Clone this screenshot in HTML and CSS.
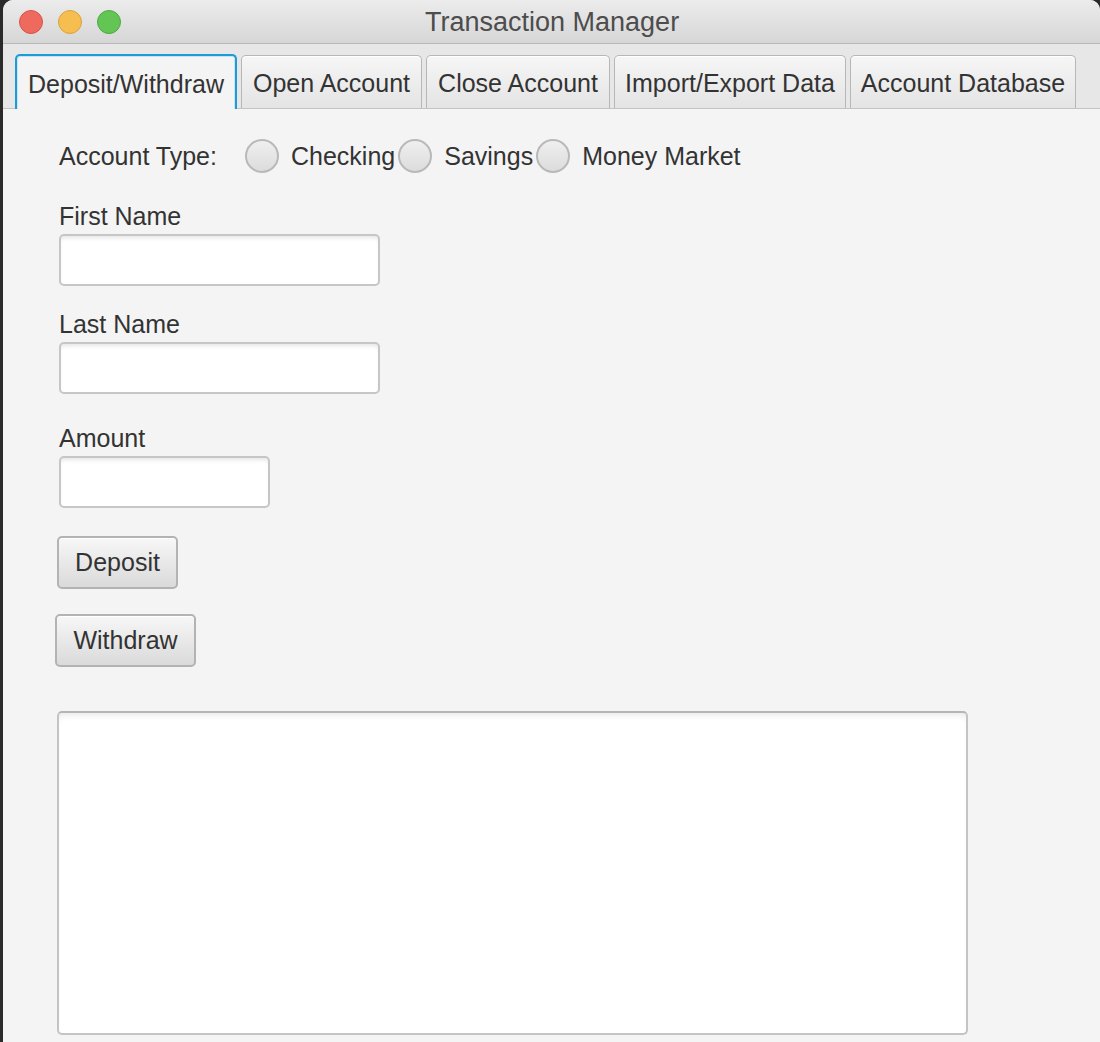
FILE: index.html
```html
<!DOCTYPE html>
<html>
<head>
<meta charset="utf-8">
<title>Transaction Manager</title>
<link rel="stylesheet" href="styles.css">
</head>
<body>
<div class="window">
  <div class="titlebar">
    <div class="lights">
      <span class="light red"></span>
      <span class="light yellow"></span>
      <span class="light green"></span>
    </div>
    <div class="title">Transaction Manager</div>
  </div>
  <div class="tabbar">
    <div class="tab tab-1 selected">Deposit/Withdraw</div>
    <div class="tab tab-2">Open Account</div>
    <div class="tab tab-3">Close Account</div>
    <div class="tab tab-4">Import/Export Data</div>
    <div class="tab tab-5">Account Database</div>
  </div>
  <div class="content">
    <div class="type-row">
      <span class="type-label">Account Type:</span>
      <label class="radio"><span class="dot"></span><span class="radio-text">Checking</span></label>
      <label class="radio"><span class="dot"></span><span class="radio-text">Savings</span></label>
      <label class="radio"><span class="dot"></span><span class="radio-text">Money Market</span></label>
    </div>
    <div class="field first">
      <div class="label">First Name</div>
      <div class="input wide"></div>
    </div>
    <div class="field last">
      <div class="label">Last Name</div>
      <div class="input wide"></div>
    </div>
    <div class="field amount">
      <div class="label">Amount</div>
      <div class="input narrow"></div>
    </div>
    <div class="btn deposit">Deposit</div>
    <div class="btn withdraw">Withdraw</div>
    <div class="textarea"></div>
  </div>
</div>
</body>
</html>
```

FILE: styles.css
```css
html, body {
  margin: 0;
  padding: 0;
  width: 1100px;
  height: 1042px;
  overflow: hidden;
  background: #2a2a2a;
  font-family: "Liberation Sans", Arial, sans-serif;
  color: #333333;
}

.window {
  margin-left: 3px;
  width: 1097px;
  height: 1042px;
  background: #f4f4f4;
  border-top-left-radius: 10px;
  border-top-right-radius: 10px;
  overflow: hidden;
  display: flex;
  flex-direction: column;
}

.titlebar {
  height: 43px;
  flex: none;
  background: linear-gradient(#ececec, #d6d6d6);
  border-bottom: 1px solid #b8b8b8;
  display: flex;
  align-items: center;
  position: relative;
}

.lights {
  display: flex;
  gap: 15px;
  padding-left: 16px;
}

.light {
  width: 24px;
  height: 24px;
  border-radius: 50%;
  box-sizing: border-box;
}
.red { background: #ee6a5f; border: 1px solid #d5544a; }
.yellow { background: #f6be4f; border: 1px solid #d9a23c; }
.green { background: #62c554; border: 1px solid #4fa941; }

.title {
  position: absolute;
  left: 422px;
  top: 0;
  height: 43px;
  line-height: 45px;
  font-size: 27px;
  color: #4d4d4d;
}

.tabbar {
  height: 65px;
  flex: none;
  background: #e7e7e7;
  border-bottom: 1px solid #c4c4c4;
  display: flex;
  align-items: flex-end;
  padding-left: 12px;
  gap: 4px;
  box-sizing: border-box;
}

.tab {
  height: 53px;
  box-sizing: border-box;
  padding-top: 3px;
  border: 1px solid #b7b7b7;
  border-bottom: none;
  border-radius: 5px 5px 0 0;
  background: linear-gradient(#f6f6f6, #e4e4e4);
  box-shadow: inset 0 1px 0 #ffffff;
  display: flex;
  align-items: center;
  justify-content: center;
  font-size: 25px;
  color: #333333;
  white-space: nowrap;
}

.tab-1 { width: 222px; }
.tab-2 { width: 181px; }
.tab-3 { width: 184px; }
.tab-4 { width: 232px; }
.tab-5 { width: 226px; }

.tab.selected {
  height: 55px;
  margin-bottom: -1px;
  border: 2px solid #1c9bd6;
  border-bottom: none;
  background: #f4f4f4;
  box-shadow: inset 1px 1px 0 #c6e4f2, inset -1px 0 0 #c6e4f2;
  position: relative;
}

.content {
  flex: 1;
  padding: 30px 0 0 56px;
  display: flex;
  flex-direction: column;
  align-items: flex-start;
  font-size: 25px;
}

.type-row {
  display: flex;
  align-items: center;
  height: 34px;
}

.type-label {
  margin-right: 28px;
}

.radio {
  display: flex;
  align-items: center;
}

.dot {
  width: 34px;
  height: 34px;
  box-sizing: border-box;
  border-radius: 50%;
  border: 2px solid #b9b9b9;
  background: linear-gradient(#efefef, #dcdcdc);
  margin-right: 12px;
}

.radio-text {
  margin-right: 3px;
}

.field {
  display: flex;
  flex-direction: column;
}

.label {
  height: 30px;
  line-height: 30px;
  margin-bottom: 3px;
}

.field.first { margin-top: 28px; }
.field.last { margin-top: 23px; }
.field.amount { margin-top: 29px; }

.input {
  height: 52px;
  box-sizing: border-box;
  border: 2px solid #c6c6c6;
  border-radius: 5px;
  background: #ffffff;
  box-shadow: inset 0 4px 4px -2px #e6e6e6;
}
.input.wide { width: 321px; }
.input.narrow { width: 211px; }

.btn {
  height: 53px;
  box-sizing: border-box;
  border: 2px solid #b3b3b3;
  border-radius: 5px;
  background: linear-gradient(#f7f7f7, #dadada);
  box-shadow: inset 0 1px 0 #ffffff;
  display: flex;
  align-items: center;
  justify-content: center;
  font-size: 25px;
}

.btn.deposit {
  width: 121px;
  margin-top: 28px;
  margin-left: -2px;
}

.btn.withdraw {
  width: 141px;
  margin-top: 25px;
  margin-left: -4px;
}

.textarea {
  margin-top: 44px;
  margin-left: -2px;
  width: 911px;
  height: 324px;
  box-sizing: border-box;
  border: 2px solid #c4c4c4;
  border-top-color: #b5b5b5;
  border-radius: 5px;
  background: #ffffff;
  box-shadow: inset 0 6px 6px -3px #ececec;
}
```
